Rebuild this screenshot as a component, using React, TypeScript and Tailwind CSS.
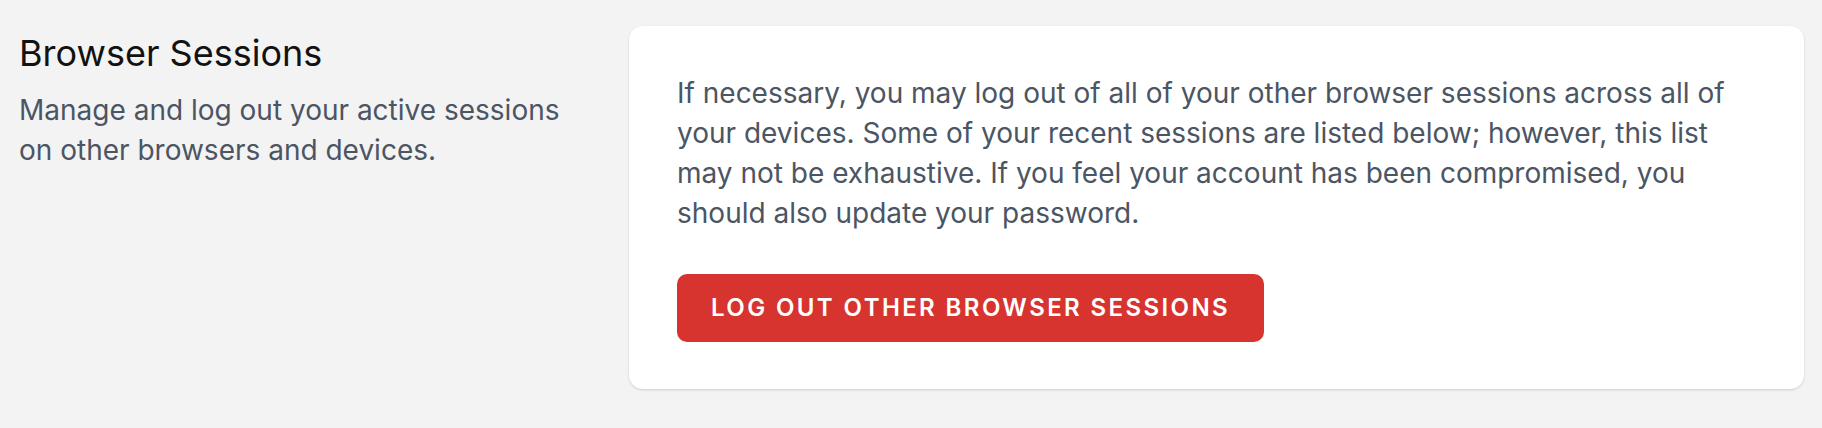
export default function App() {
  return (
    <div
      className="min-h-[428px] w-full bg-[#f3f3f3] pt-[26px] pl-[19px] pr-[18px]"
      style={{ fontFamily: 'Inter, "Noto Sans", sans-serif' }}
    >
      <div className="flex">
        <div className="w-[610px] shrink-0 pt-[3px]">
          <h3 className="text-[36px] leading-[48px] font-normal text-[#121212]">
            Browser Sessions
          </h3>
          <p className="mt-[13px] w-[565px] text-[28px] leading-[40px] text-[#4b5563]">
            Manage and log out your active sessions on other browsers and devices.
          </p>
        </div>

        <div className="flex-1 rounded-[14px] bg-white px-[48px] pt-[47px] pb-[47px] shadow-[0_1px_3px_rgba(0,0,0,0.1),0_1px_2px_rgba(0,0,0,0.06)]">
          <div className="max-w-[1078px] text-[28px] leading-[40px] text-[#4b5563]">
            If necessary, you may log out of all of your other browser sessions across all of
            your devices. Some of your recent sessions are listed below; however, this list
            may not be exhaustive. If you feel your account has been compromised, you
            should also update your password.
          </div>

          <div className="mt-[41px] flex items-center">
            <button
              type="button"
              className="h-[68px] rounded-[10px] bg-[#d7342f] px-[34px] text-[24px] font-semibold uppercase tracking-widest text-white"
            >
              Log Out Other Browser Sessions
            </button>
          </div>
        </div>
      </div>
    </div>
  );
}
